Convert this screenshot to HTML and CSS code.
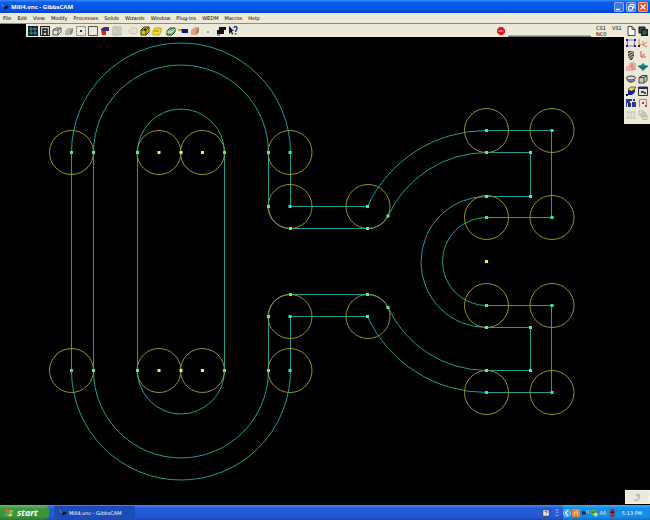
FILE: index.html
```html
<!DOCTYPE html>
<html lang="en">
<head>
    <meta charset="UTF-8">
    <meta name="viewport" content="width=device-width, initial-scale=1.0">
    <title>Mill4.vnc - GibbsCAM</title>
    <link rel="stylesheet" href="styles.css">
</head>
<body>
    <!-- Title bar -->
    <header class="titlebar">
        <svg class="app-icon" viewBox="0 0 10 10"><path d="M1 0l4 4 4-1v4H6l-1 2z" fill="#10103c"/><path d="M1 1l3 4" stroke="#c8c8c8"/></svg>
        <h1>Mill4.vnc - GibbsCAM</h1>
        <button class="win-btn" aria-label="Minimize"><svg viewBox="0 0 10 10"><path d="M2 7.500h4" stroke="#fff" stroke-width="1.500"/></svg></button>
        <button class="win-btn" aria-label="Restore"><svg viewBox="0 0 10 10"><path d="M4 4V2.500h4V6H6.500M2.500 4.500h4v3.500h-4z" fill="none" stroke="#fff"/></svg></button>
        <button class="win-btn close" aria-label="Close"><svg viewBox="0 0 10 10"><path d="M2.500 2.500l5 5M7.500 2.500l-5 5" stroke="#fff" stroke-width="1.400"/></svg></button>
    </header>

    <!-- Menu -->
    <nav class="menubar">
        <button>File</button>
        <button>Edit</button>
        <button>View</button>
        <button>Modify</button>
        <button>Processes</button>
        <button>Solids</button>
        <button>Wizards</button>
        <button>Window</button>
        <button>Plug-Ins</button>
        <button>WEDM</button>
        <button>Macros</button>
        <button>Help</button>
    </nav>

    <main class="workspace">
        <div class="left">
            <!-- Toolbar -->
            <div class="toolbar">
                <div class="group">
                    <button aria-label="Grid"><svg viewBox="0 0 10 10"><path d="M0 0h10v10H0z" fill="#102030"/><path d="M3 1v8M7 1v8M1 3h8M1 7h8" stroke="#3c8c9c"/></svg></button>
                    <button aria-label="Labels"><svg viewBox="0 0 10 10"><path d="M0 0h10v10H0z" fill="#d0d0c8"/><path d="M.5 .5h9v9h-9z" fill="none" stroke="#181818"/><path d="M3 9V3h4v6M3 6h4" fill="none" stroke="#181818" stroke-width="1.500"/></svg></button>
                    <button aria-label="Wireframe"><svg viewBox="0 0 10 10"><path d="M1 4l3-2h5v4L6 9H1zM1 4h5v5M6 4l3-2" fill="#e8e5da" stroke="#555"/></svg></button>
                    <button aria-label="Shaded"><svg viewBox="0 0 10 10"><path d="M1 5l3-3h5v4L7 9H1z" fill="#b4b2aa"/><path d="M6 5l3-3v4L6 9z" fill="#8a8984"/></svg></button>
                    <button aria-label="Center"><svg viewBox="0 0 10 10"><path d="M.5 .5h9v9h-9z" fill="none" stroke="#777" stroke-dasharray="2 1"/><path d="M4 4h2v2H4z" fill="#333"/></svg></button>
                    <button aria-label="Frame"><svg viewBox="0 0 10 10"><path d="M.5 .5h9v9h-9z" fill="none" stroke="#555"/></svg></button>
                    <button aria-label="Part"><svg viewBox="0 0 10 10"><path d="M1 3l3-2h5v4H5v4H2z" fill="#542060"/><path d="M2 5h4v4H2z" fill="#d03020"/><path d="M5 3h4v2H5z" fill="#2838a0"/></svg></button>
                    <button aria-label="List" disabled><svg viewBox="0 0 10 10"><path d="M1 1h8v8H1zM4 1v8M5 3h3M5 5h3M5 7h3M2 4h1M2 7h1" fill="none" stroke="#aaa8a0"/></svg></button>
                </div>
                <div class="group wide">
                    <button aria-label="Cloud" disabled><svg viewBox="0 0 10 10"><path d="M1 5c0-3 2 0 3-3s2 2 3 0 3 1 2 4-8 3-8-1z" fill="#e4e1d4" stroke="#c4c1b4"/></svg></button>
                    <button aria-label="Tool block"><svg viewBox="0 0 10 10"><path d="M1 4l3-3h5v5L6 9H1z" fill="#d8c818" stroke="#3c3808"/><path d="M1 4h5v5M6 4l3-3" fill="none" stroke="#3c3808"/><path d="M4 4l2-1" stroke="#222" stroke-width="2"/></svg></button>
                    <button aria-label="Stock"><svg viewBox="0 0 10 10"><path d="M1 4l2-2h6v4L7 9H1z" fill="#f0dc20" stroke="#c0ac18"/><path d="M2 5h5" stroke="#988810"/></svg></button>
                </div>
                <div class="group">
                    <button aria-label="Layers"><svg viewBox="0 0 10 10"><path d="M1 5l3-3h5v4L6 9H1z" fill="#88b888" stroke="#203c20"/><path d="M1 6h5l3-3" fill="none" stroke="#f0f0e0"/></svg></button>
                    <button aria-label="Cut"><svg viewBox="0 0 10 10"><path d="M0 3h3v2H0z" fill="#c0b820"/><path d="M3 3h7v4H4z" fill="#101890"/></svg></button>
                    <button aria-label="Solid"><svg viewBox="0 0 10 10"><path d="M1 4l4-3h4v5L6 9H1z" fill="#e0a48c"/><path d="M6 4l3-3v5L6 9z" fill="#b87c68"/></svg></button>
                </div>
                <div class="group">
                    <button aria-label="Point" disabled><svg viewBox="0 0 10 10"><path d="M3 5h2v2H3z" fill="#aaa8a0"/></svg></button>
                    <button aria-label="Move tool"><svg viewBox="0 0 10 10"><path d="M3 1h7v3H8v4H1V4h2z" fill="#101010"/><path d="M1 9h3" stroke="#2030a0"/></svg></button>
                    <button aria-label="Help pointer"><svg viewBox="0 0 10 10"><path d="M1 0v8l2-2 1 3 1-1-1-3h2z" fill="#101040"/><path d="M6 2c0-2 3-2 3 0S7.500 4 7.500 6M7.500 7v1.500" fill="none" stroke="#202880" stroke-width="1.300"/></svg></button>
                </div>
                <div class="status">
                    <svg class="stop" viewBox="0 0 10 10"><path d="M3 0h4l3 3v4l-3 3H3L0 7V3z" fill="#e01820"/><path d="M2 5h6" stroke="#f8b8b8" stroke-width="2" stroke-dasharray="1 .6"/></svg>
                    <div class="progress"></div>
                    <div class="readout"><span>CS1</span><span>VS1</span><span>NC0</span></div>
                </div>
            </div>

            <!-- Part geometry -->
            <svg class="canvas" viewBox="0 37 624 468">
                <g class="geometry">
                    <path d="M290.500 206.500V152.500A109.500 109.500 0 0 0 71.500 152.500V370.500A109.500 109.500 0 0 0 290.500 370.500V316.500H367.500A131 131 0 0 0 486.500 392.500H551.500V305.500H486.500A44 44 0 0 1 486.500 217.500H551.500V130.500H486.500A131 131 0 0 0 367.500 206.500Z"/>
                    <path d="M268.500 206.500V152.500A87.500 87.500 0 0 0 93.500 152.500V370.500A87.500 87.500 0 0 0 268.500 370.500V316.500A22 22 0 0 1 290.500 294.500H367.500A22 22 0 0 1 388 307.500A109 109 0 0 0 486.500 370.500H530.500V327.500H486.500A65.500 65.500 0 0 1 486.500 196.500H530.500V152.500H486.500A109 109 0 0 0 388 216A22 22 0 0 1 367.500 228.500H290.500A22 22 0 0 1 268.500 206.500Z"/>
                    <path d="M137.500 152.500A43.500 43.500 0 0 1 224.500 152.500V370.500A43.500 43.500 0 0 1 137.500 370.500Z"/>
                </g>
                <g class="circles">
                    <circle cx="71.500" cy="152.500" r="22"/>
                    <circle cx="159" cy="152.500" r="22"/>
                    <circle cx="202.500" cy="152.500" r="22"/>
                    <circle cx="290" cy="152.500" r="22"/>
                    <circle cx="290" cy="206.500" r="22"/>
                    <circle cx="368" cy="206.500" r="22"/>
                    <circle cx="486.500" cy="130.500" r="22"/>
                    <circle cx="552" cy="130.500" r="22"/>
                    <circle cx="486.500" cy="217.500" r="22"/>
                    <circle cx="552" cy="217.500" r="22"/>
                    <circle cx="71.500" cy="370.500" r="22"/>
                    <circle cx="159" cy="370.500" r="22"/>
                    <circle cx="202.500" cy="370.500" r="22"/>
                    <circle cx="290" cy="370.500" r="22"/>
                    <circle cx="290" cy="316.500" r="22"/>
                    <circle cx="368" cy="316.500" r="22"/>
                    <circle cx="486.500" cy="305.500" r="22"/>
                    <circle cx="552" cy="305.500" r="22"/>
                    <circle cx="486.500" cy="392.500" r="22"/>
                    <circle cx="552" cy="392.500" r="22"/>
                </g>
                <!-- zero length segments draw the square points -->
                <path class="points" d="M71.500 152.500h.01M290 152.500h.01M290 206.500h.01M367.500 206.500h.01M486.500 130.500h.01M552 130.500h.01M486.500 217.500h.01M552 217.500h.01M71.500 370.500h.01M290 370.500h.01M290 316.500h.01M367.500 316.500h.01M486.500 305.500h.01M552 305.500h.01M486.500 392.500h.01M552 392.500h.01"/>
                <path class="points small" d="M93.500 152.500h.01M137.500 152.500h.01M224.500 152.500h.01M268.500 152.500h.01M268.500 206.500h.01M290.500 228.500h.01M367.500 228.500h.01M388 216h.01M486.500 152.500h.01M530.500 152.500h.01M486.500 196.500h.01M530.500 196.500h.01M93.500 370.500h.01M137.500 370.500h.01M224.500 370.500h.01M268.500 370.500h.01M268.500 316.500h.01M290.500 294.500h.01M367.500 294.500h.01M388 307.500h.01M486.500 327.500h.01M530.500 327.500h.01M486.500 370.500h.01M530.500 370.500h.01"/>
                <path class="points centers" d="M159 152.500h.01M181 152.500h.01M202.500 152.500h.01M159 370.500h.01M181 370.500h.01M202.500 370.500h.01M486.500 261.500h.01"/>
            </svg>
        </div>

        <div class="right">
            <!-- Tool palette -->
            <div class="palette">
                <button aria-label="New"><svg viewBox="0 0 10 10"><path d="M2 .5h4l3 3v6H2zM6 .5v3h3" fill="#fff" stroke="#444"/></svg></button>
                <button aria-label="Workgroups"><svg viewBox="0 0 10 10"><path d="M1 1h6v6H1z" fill="#445" stroke="#111"/><path d="M3 3h7v7H3z" fill="#102820"/><path d="M4.500 4.500h4v4h-4z" fill="#306050"/></svg></button>
                <button aria-label="Geometry"><svg viewBox="0 0 10 10"><path d="M1.500 2h7v6h-7z" fill="none" stroke="#7878e0"/><path d="M0 1h2v2H0zM8 1h2v2H8zM0 7h2v2H0zM8 7h2v2H8z" fill="#1818c0"/></svg></button>
                <button aria-label="Coordinate systems"><svg viewBox="0 0 10 10"><path d="M1 1v5l3 1M5 3v4l4 2M5 7l4-3" fill="none" stroke="#d87878"/><path d="M0 7h2v2H0z" fill="#222"/></svg></button>
                <button aria-label="Thread"><svg viewBox="0 0 10 10"><path d="M2 1h6v5L6 10H4L2 7z" fill="#444"/><path d="M2 4l6-3M2 7l6-4M3 9l4-3" stroke="#d0d0c8"/></svg></button>
                <button aria-label="Axis"><svg viewBox="0 0 10 10"><path d="M3 1v6h5M3 7l4-3" fill="none" stroke="#e05050"/></svg></button>
                <button aria-label="Solid modeling"><svg viewBox="0 0 10 10"><path d="M0 4h3V1l3-1 4 1v6L7 9H0z" fill="#e8b0a8"/><path d="M3 4h3v3h4M6 1v3" fill="none" stroke="#c88078"/></svg></button>
                <button aria-label="Surfaces"><svg viewBox="0 0 10 10"><path d="M0 4l3-1 2-2 2 2 3 1-5 5z" fill="#188898"/><path d="M0 4l5 2 5-2" fill="none" stroke="#105868"/></svg></button>
                <button aria-label="Stock"><svg viewBox="0 0 10 10"><ellipse cx="5" cy="4" rx="4.500" ry="2" fill="#ddd" stroke="#333"/><path d="M1 5c0 4 7 4 8 1" fill="#888" stroke="#444"/></svg></button>
                <button aria-label="Box"><svg viewBox="0 0 10 10"><path d="M1 3.500l3-2h5v5l-3 2.500H1zM1 3.500h5V9M6 3.500l3-2" fill="#c8c6c0" stroke="#444"/></svg></button>
                <button aria-label="Machining"><svg viewBox="0 0 10 10"><path d="M2 3l3-2h5L8 4 5 6z" fill="#e8d820" stroke="#222" stroke-width=".6"/><path d="M2 4l4 1 3-2v3L6 9H2z" fill="#1820a0"/><path d="M0 8h2v2H0z" fill="#111"/></svg></button>
                <button aria-label="Operations"><svg viewBox="0 0 10 10"><path d="M.5 1h9v8.500h-9z" fill="#e0e0d8" stroke="#333"/><path d="M1 2h8" stroke="#202870" stroke-width="2"/><path d="M3 5h3v2H3zM6 6h2v2H6z" fill="#445"/></svg></button>
                <button aria-label="Tools"><svg viewBox="0 0 10 10"><path d="M0 1h6v2H4v2H1v4H0zM6 4h4v5H6z" fill="#2838b0"/><path d="M2 5h3v4H2zM7 1h2v2H7z" fill="#333"/></svg></button>
                <button aria-label="Post"><svg viewBox="0 0 10 10"><path d="M1.500 9V1.500h7V7" fill="none" stroke="#c07888"/><path d="M4 4h2v2H4zM7 7h2v2H7z" fill="#c03050"/></svg></button>
                <button aria-label="Table" disabled><svg viewBox="0 0 10 10"><path d="M0 2h10M0 8h10M2 2v6M5 2v6M8 2v6" stroke="#c4c1b2"/></svg></button>
                <button aria-label="Copies" disabled><svg viewBox="0 0 10 10"><path d="M1 1h5v4H1zM3 3h5v4H3zM5 5.500h4v4H5z" fill="#ece9d8" stroke="#b8b5a6"/></svg></button>
            </div>
            <button class="corner" aria-label="Redraw" disabled><svg viewBox="0 0 10 10"><path d="M3 1h5v6H6v2H1V7h4V4H3z" fill="#c4c1b4"/></svg></button>
        </div>
    </main>

    <!-- Taskbar -->
    <footer class="taskbar">
        <button class="start">
            <svg viewBox="0 0 10 10"><path d="M1 2q2-1 4 0L4 5q-2-1-4 0z" fill="#f06030"/><path d="M5.500 2q2 1 4 0l-1 3q-2 1-4 0z" fill="#80c840"/><path d="M0 6q2-1 4 0L3 9q-1-1-3 0z" fill="#5090f0"/><path d="M4.500 6q2 1 4 0l-1 3q-2 1-4 0z" fill="#f8d030"/></svg>
            start
        </button>
        <button class="task">
            <svg viewBox="0 0 10 10"><path d="M1 0l4 4 4-1v4H6l-1 2z" fill="#101040"/><path d="M1 1l3 4" stroke="#c8c8c8"/></svg>
            Mill4.vnc - GibbsCAM
        </button>
        <div class="lang">
            <svg viewBox="0 0 10 10"><path d="M1 1h8v8H1z" fill="#f4f4f0" stroke="#333"/><path d="M3.500 4c0-2 3-2 3 0L5 5.500V6M5 7v1" fill="none" stroke="#222"/></svg>
            <svg viewBox="0 0 10 10"><path d="M3 1h4M4 4h3M3 7l2 2 2-2" fill="none" stroke="#b8d0f8"/></svg>
        </div>
        <div class="tray">
            <svg viewBox="0 0 10 10"><circle cx="5" cy="5" r="4.500" fill="#38a0f0" stroke="#a0d4fc"/><path d="M6 2L3 5l3 3" fill="none" stroke="#fff" stroke-width="1.500"/></svg>
            <svg viewBox="0 0 10 10"><path d="M0 0h10v10H0z" fill="#e88038"/><path d="M3 8V4h3V2M7 4v4" fill="none" stroke="#fbe0c0"/></svg>
            <svg viewBox="0 0 10 10"><path d="M1 3h5v4H1z" fill="#102858"/><path d="M7 2v3M9 1v5" stroke="#b0d0f0"/></svg>
            <svg viewBox="0 0 10 10"><circle cx="4" cy="4" r="3.500" fill="#58b838"/><circle cx="7" cy="7" r="2.500" fill="#e0e048"/><path d="M2 4h4" stroke="#183818"/></svg>
            <svg viewBox="0 0 10 10"><path d="M1 4h8v3H1z" fill="#90b0d8"/><path d="M2 3h2M6 3h2" stroke="#e0e8f8"/></svg>
            <svg viewBox="0 0 10 10"><path d="M3 0h5v10H3z" fill="#b82828"/><path d="M3 4h5" stroke="#301818" stroke-width="2"/></svg>
            <time>5:13 PM</time>
        </div>
    </footer>
</body>
</html>
```

FILE: styles.css
```css
body {
    margin: 0;
    min-height: 100vh;
    display: flex;
    flex-direction: column;
    background-color: #000;
    font-family: "DejaVu Sans", sans-serif;
    font-size: 5px;
    line-height: 6px;
    color: #000;
}

button {
    border: none;
    padding: 0;
    background: none;
    font: inherit;
    color: inherit;
}

svg {
    display: block;
    flex: none;
}

/* Title bar */
.titlebar {
    display: flex;
    align-items: center;
    gap: 2px;
    height: 13px;
    padding: 0 2px 0 1px;
    background: linear-gradient(#3a8cf8, #0a5ae8 20%, #0355e4 70%, #0344c4);
}

.titlebar h1 {
    flex: 1;
    margin: 0;
    font-family: "Open Sans", sans-serif;
    font-size: 6px;
    line-height: 8px;
    color: #fff;
}

.app-icon {
    width: 8px;
    height: 8px;
}

.win-btn {
    width: 10px;
    height: 10px;
    border-radius: 2px;
    background-color: #3c78ec;
    box-shadow: inset 0 0 0 1px #8cb0f4;
}

.win-btn svg {
    width: 10px;
    height: 10px;
}

.close {
    background-color: #dc4c28;
    box-shadow: inset 0 0 0 1px #eca890;
}

/* Menu */
.menubar {
    display: flex;
    align-items: center;
    gap: 6px;
    height: 10px;
    padding: 0 3px;
    background-color: #ece9d8;
    border-bottom: 1px solid #8c8a80;
}

.workspace {
    flex: 1;
    display: flex;
}

.left {
    flex: 1;
    display: flex;
    flex-direction: column;
}

/* Toolbar */
.toolbar {
    display: flex;
    align-items: center;
    gap: 2px;
    height: 13px;
    margin-left: 26px;
    padding-left: 1px;
    background-color: #ece9d8;
}

.group {
    display: flex;
}

.wide {
    margin-left: 2px;
}

.group button,
.palette button {
    display: grid;
    place-items: center;
    width: 12px;
    height: 12px;
}

.group svg,
.palette svg {
    width: 10px;
    height: 10px;
}

.status {
    display: flex;
    align-items: center;
    gap: 3px;
    margin-left: auto;
    padding-right: 3px;
}

.stop {
    width: 8px;
    height: 8px;
}

.progress {
    align-self: flex-end;
    width: 83px;
    height: 1px;
    border-top: 1px solid #b4b2a8;
    background-color: #6c6c6c;
}

.readout {
    display: grid;
    grid-template-columns: 16px 9px;
    margin-left: 2px;
}

/* Part geometry */
.canvas {
    flex: 1;
    width: 100%;
    min-height: 0;
}

.geometry {
    fill: none;
    stroke: #1c9e96;
}

.circles {
    fill: none;
    stroke: #949228;
}

.points {
    fill: none;
    stroke: #3ce0c4;
    stroke-width: 3;
    stroke-linecap: square;
}

.small {
    stroke: #58e8a8;
}

.centers {
    stroke: #f4f430;
}

/* Tool palette */
.right {
    display: flex;
    flex-direction: column;
    justify-content: space-between;
}

.palette {
    display: grid;
    grid-template-columns: 12px 12px;
    padding: 1px 1px 3px;
    background-color: #ece9d8;
}

.corner {
    display: grid;
    place-items: center;
    height: 14px;
    margin: 0 0 1px 1px;
    background-color: #ece9d8;
    border: 1px solid #f8f6ec;
}

.corner svg {
    width: 9px;
    height: 9px;
}

/* Taskbar */
.taskbar {
    display: flex;
    align-items: center;
    height: 15px;
    background: linear-gradient(#4a88f0, #245cd8 20%, #2458d4 80%, #1c48b0);
    color: #fff;
}

.start {
    display: flex;
    align-items: center;
    gap: 3px;
    width: 49px;
    height: 15px;
    padding-left: 5px;
    border-radius: 0 5px 5px 0;
    background: linear-gradient(#68b868, #3c963c 25%, #3c943c 75%, #2c762c);
    font-family: "Open Sans", sans-serif;
    font-size: 9px;
    font-weight: bold;
    font-style: italic;
    line-height: 12px;
}

.start svg {
    width: 9px;
    height: 9px;
}

.task {
    display: flex;
    align-items: center;
    gap: 2px;
    width: 81px;
    height: 13px;
    margin-left: 5px;
    padding-left: 5px;
    border-radius: 1px;
    background-color: #1c4cb8;
}

.task svg,
.lang svg,
.tray svg {
    width: 8px;
    height: 8px;
}

.lang {
    display: flex;
    gap: 3px;
    margin-left: auto;
}

.tray {
    display: flex;
    align-items: center;
    gap: 1px;
    height: 15px;
    margin-left: 2px;
    padding-right: 8px;
    background: linear-gradient(#40b0f8, #1490ec 20%, #128cea 80%, #0c70c0);
}

.tray time {
    margin-left: 5px;
}
```
